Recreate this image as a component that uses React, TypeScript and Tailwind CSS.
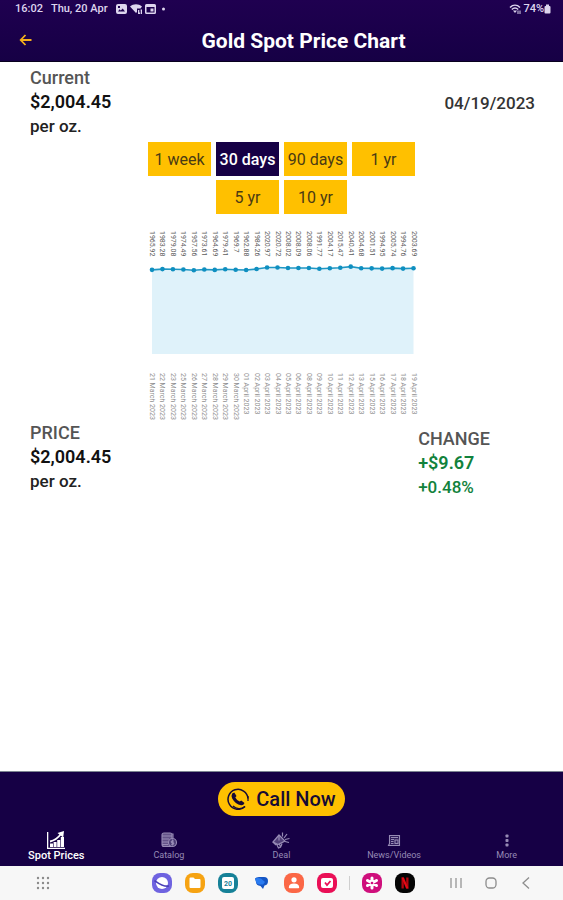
import React, { useState } from 'react';

interface PricePoint {
  price: string;
  date: string;
}

const points: PricePoint[] = [
  { price: '1965.92', date: '21 March 2023' },
  { price: '1983.28', date: '22 March 2023' },
  { price: '1979.08', date: '23 March 2023' },
  { price: '1974.49', date: '25 March 2023' },
  { price: '1957.56', date: '26 March 2023' },
  { price: '1973.61', date: '27 March 2023' },
  { price: '1964.69', date: '28 March 2023' },
  { price: '1979.41', date: '29 March 2023' },
  { price: '1969.7', date: '30 March 2023' },
  { price: '1962.88', date: '01 April 2023' },
  { price: '1984.26', date: '02 April 2023' },
  { price: '2020.97', date: '03 April 2023' },
  { price: '2020.72', date: '04 April 2023' },
  { price: '2008.02', date: '05 April 2023' },
  { price: '2008.09', date: '06 April 2023' },
  { price: '2008.06', date: '08 April 2023' },
  { price: '1991.77', date: '09 April 2023' },
  { price: '2004.17', date: '10 April 2023' },
  { price: '2015.47', date: '11 April 2023' },
  { price: '2040.41', date: '12 April 2023' },
  { price: '2004.68', date: '13 April 2023' },
  { price: '2001.51', date: '15 April 2023' },
  { price: '1994.95', date: '16 April 2023' },
  { price: '2005.74', date: '17 April 2023' },
  { price: '1994.76', date: '18 April 2023' },
  { price: '2003.69', date: '19 April 2023' }
];

const periods = ['1 week', '30 days', '90 days', '1 yr', '5 yr', '10 yr'];

function PriceChart() {
  const bottom = 128;
  const coords = points.map((point, index) => ({
    ...point,
    x: 6 + index * 10.46,
    y: bottom - Number(point.price) * 0.0428
  }));
  const line = coords.map((c) => `${c.x},${c.y}`).join(' ');
  const last = coords[coords.length - 1];

  return (
    <svg viewBox="0 0 272 195" className="w-68 overflow-visible" role="img" aria-label="Gold price">
      <polygon points={`6,${bottom} ${line} ${last.x},${bottom}`} fill="#dff2fa" />
      <polyline points={line} fill="none" stroke="#1f97c4" strokeWidth="1.6" />
      {coords.map((c) => (
        <g key={c.date}>
          <circle cx={c.x} cy={c.y} r="2.3" fill="#0f8fc0" />
          <text transform={`translate(${c.x - 2} 5) rotate(90)`} fontSize="7" fill="#5c5c5c">{c.price}</text>
          <text transform={`translate(${c.x - 2} 147) rotate(90)`} fontSize="7" fill="#8f8f8f">{c.date}</text>
        </g>
      ))}
    </svg>
  );
}

function StatusBar() {
  return (
    <div className="flex h-[18px] items-center justify-between pl-[15px] pr-3 text-[11px] font-medium text-[#ddd5ee]">
      <div className="flex items-center">
        <span>16:02</span>
        <span className="ml-2">Thu, 20 Apr</span>
        <svg viewBox="0 0 50 12" className="ml-2 h-3 w-[50px]" fill="currentColor">
          <path fillRule="evenodd" d="M2 1h7a2 2 0 0 1 2 2v6a2 2 0 0 1-2 2H2a2 2 0 0 1-2-2V3a2 2 0 0 1 2-2zM2 8.5h7L6.7 5.5 4.8 7.4 3.6 6.3zM2 3v2h2V3z" />
          <path d="M14 3.6C17.5.5 22.5.5 26 3.6L24.5 5.5H21V9L20 10z" />
          <path d="M22 7h1.3v2.5h1V11H22zM24.5 6.5H26V11h-1z" />
          <path fillRule="evenodd" d="M30.5 1h8A1.5 1.5 0 0 1 40 2.5v7a1.5 1.5 0 0 1-1.5 1.5h-8A1.5 1.5 0 0 1 29 9.5v-7A1.5 1.5 0 0 1 30.5 1zM30.5 4v5.5h8V4zM34.5 5.5h3v3h-3z" />
          <circle cx="47.5" cy="6" r="1.5" />
        </svg>
      </div>
      <div className="flex items-center">
        <svg viewBox="0 0 12 12" className="h-3 w-3" fill="none" stroke="currentColor" strokeWidth="1.5">
          <path d="M1 4.5C4 1.5 8 1.5 11 4.5M2.8 6.5C5 4.5 7 4.5 9.2 6.5" />
          <path d="M4 7.5 6 10 8 7.5z" fill="currentColor" stroke="none" />
          <path d="M9 7.5V11M11 7.5V11" strokeWidth="1" />
        </svg>
        <span className="ml-0.5">74%</span>
        <svg viewBox="0 0 7 10" className="h-2.5 w-[7px]" fill="currentColor">
          <rect x="2" y="0.5" width="3" height="2" />
          <rect x="0.5" y="2" width="6" height="7.5" rx="1" />
        </svg>
      </div>
    </div>
  );
}

const tabs = [
  {
    label: 'Spot Prices',
    icon: (
      <svg viewBox="0 0 18 18" className="h-[18px] w-[18px]" fill="currentColor">
        <path d="M0 1h1.3v15.7H18V18H0z" />
        <path d="M3 12.5h3V16H3zM6.6 11h3v5h-3zM10.2 9h3v7h-3zM13.8 6H17v10h-3.2z" />
        <path d="M3 10.5C8 9.5 11 7 14 3" fill="none" stroke="currentColor" strokeWidth="1.8" />
        <path d="M10.5 2 17 0l-.8 6.5z" />
      </svg>
    )
  },
  {
    label: 'Catalog',
    icon: (
      <svg viewBox="0 0 18 18" className="h-[18px] w-[18px]" fill="none" stroke="currentColor" strokeWidth="1.1">
        <rect x="2" y="2" width="10" height="13.5" rx="2" fill="currentColor" fillOpacity="0.6" />
        <path d="M2 5h10M2 8h7M2 11h6M2 13.5h6M12 3h1v4" />
        <circle cx="12.5" cy="11.5" r="4" fill="#4a3b74" />
        <path d="M12.5 8.5v6M14 10h-2a.8.8 0 0 0 0 1.6h1a.8.8 0 0 1 0 1.6h-2" />
      </svg>
    )
  },
  {
    label: 'Deal',
    icon: (
      <svg viewBox="0 0 18 18" className="h-[18px] w-[18px]" fill="none" stroke="currentColor" strokeWidth="1.2">
        <path d="M1 11 7 4l6 6-7 3.5z" fill="currentColor" fillOpacity="0.45" />
        <path d="M1 11l3 3M7 4v5.5M4.5 13l2 4 2-.8-1-3.2M10 12.5l-1 3" />
        <path d="M10.5 5.5v-4M12 7l3-4M13 8.5l4.5-1M13 10.5l4 1" />
      </svg>
    )
  },
  {
    label: 'News/Videos',
    icon: (
      <svg viewBox="0 0 18 18" className="h-[18px] w-[18px]" fill="none" stroke="currentColor" strokeWidth="1.1">
        <path d="M4.5 4.5h10v10h-11l1-2z" fill="currentColor" fillOpacity="0.2" />
        <path d="M6 6.5h7M6 8.5h3M6 10.5h2.5M6 12.5h2.5" />
        <rect x="10" y="9" width="3" height="3.5" />
      </svg>
    )
  },
  {
    label: 'More',
    icon: (
      <svg viewBox="0 0 18 18" className="h-[18px] w-[18px]" fill="currentColor">
        <rect x="7.5" y="3.5" width="3" height="3" rx="0.8" />
        <rect x="7.5" y="8" width="3" height="3" rx="0.8" />
        <rect x="7.5" y="12.5" width="3" height="3" rx="0.8" />
      </svg>
    )
  }
];

const dockApps = [
  {
    name: 'Internet',
    icon: (
      <>
        <rect width="20" height="20" rx="8" fill="#6f63e0" />
        <circle cx="10" cy="10" r="6" fill="#fff" />
        <path d="M2.5 7.5C6 10 11 14 17 13" fill="none" stroke="#4a3fb8" strokeWidth="1.6" />
      </>
    )
  },
  {
    name: 'My Files',
    icon: (
      <>
        <rect width="20" height="20" rx="8" fill="#f6a313" />
        <path d="M4.5 5.5q0-1 1-1h3L10 6h4.5q1 0 1 1v7q0 1-1 1h-9q-1 0-1-1z" fill="#fff" />
      </>
    )
  },
  {
    name: 'Calendar',
    icon: (
      <>
        <rect width="20" height="20" rx="8" fill="#168198" />
        <rect x="4" y="4" width="12" height="12" rx="2" fill="#fff" />
        <text x="10" y="12.8" textAnchor="middle" fontSize="7" fontWeight="700" fill="#168198">20</text>
      </>
    )
  },
  {
    name: 'Messages',
    icon: (
      <>
        <path d="M4 5.5Q5 4 8 4h5q4 0 4 4t-3.5 4.5L12 16l-2.5-3Q5 12.5 5 9z" fill="#1455c4" />
        <path d="M4 5.5Q7 4.5 10 5.5L14 9l-2 2.5H9Q5.5 11.5 5 8.5z" fill="#2a7bf0" />
      </>
    )
  },
  {
    name: 'Contacts',
    icon: (
      <>
        <rect width="20" height="20" rx="8" fill="#fb6746" />
        <circle cx="10" cy="6.8" r="2.6" fill="#fff" />
        <path d="M4.8 14.5q0-4 5.2-4t5.2 4q0 .8-.8.8H5.600q-.8 0-.8-.8z" fill="#fff" />
      </>
    )
  },
  {
    name: 'Shop',
    icon: (
      <>
        <rect width="20" height="20" rx="8" fill="#ea0f56" />
        <rect x="4" y="5" width="12" height="10" rx="2" fill="#fff" />
        <path d="M8 9.5 10 12l3.5-4" fill="none" stroke="#ea0f56" strokeWidth="1.8" />
      </>
    )
  }
];

const recentApps = [
  {
    name: 'Gallery',
    icon: (
      <>
        <rect width="20" height="20" rx="8" fill="#cf0f7c" />
        <path d="M10 5v10M5.5 7.5l9 5M5.5 12.5l9-5" stroke="#fff" strokeWidth="3" strokeLinecap="round" />
        <circle cx="10" cy="10" r="1.3" fill="#cf0f7c" />
      </>
    )
  },
  {
    name: 'Netflix',
    icon: (
      <>
        <rect width="20" height="20" rx="8" fill="#050505" />
        <path d="M6.5 4.5h2.3v11H6.5zM11.2 4.5h2.3v11h-2.3z" fill="#b1060f" />
        <path d="M6.5 4.5h2.4l4.6 11h-2.4z" fill="#e50914" />
      </>
    )
  }
];

function AppIcon({ name, icon }: { name: string; icon: React.ReactNode }) {
  return (
    <button aria-label={name} className="shrink-0">
      <svg viewBox="0 0 20 20" className="h-5 w-5">{icon}</svg>
    </button>
  );
}

function Dock() {
  return (
    <div className="flex h-[34px] items-center bg-[#f7f7f7] pl-9 pr-[30px]">
      <button aria-label="All apps">
        <svg viewBox="0 0 14 14" className="h-3.5 w-3.5" fill="#8b8b8b">
          {[2, 7, 12].map((y) => [2, 7, 12].map((x) => <circle key={`${x}-${y}`} cx={x} cy={y} r="1.2" />))}
        </svg>
      </button>
      <div className="flex-3" />
      <div className="flex items-center gap-[13px]">
        {dockApps.map((app) => <AppIcon key={app.name} {...app} />)}
      </div>
      <div className="mx-3 h-3.5 w-px bg-[#cfcfcf]" />
      <div className="flex items-center gap-[13px]">
        {recentApps.map((app) => <AppIcon key={app.name} {...app} />)}
      </div>
      <div className="flex-1" />
      <div className="flex items-center gap-[21px]">
        <button aria-label="Recents">
          <svg viewBox="0 0 14 14" className="h-3.5 w-3.5" stroke="#8d8d8d" strokeWidth="1.2">
            <path d="M2 2v10M7 2v10M12 2v10" />
          </svg>
        </button>
        <button aria-label="Home">
          <svg viewBox="0 0 14 14" className="h-3.5 w-3.5" fill="none" stroke="#8d8d8d" strokeWidth="1.3">
            <rect x="2" y="2" width="10" height="10" rx="3.5" />
          </svg>
        </button>
        <button aria-label="Back">
          <svg viewBox="0 0 14 14" className="h-3.5 w-3.5" fill="none" stroke="#8d8d8d" strokeWidth="1.3">
            <path d="M10 1.5 4 7l6 5.5" />
          </svg>
        </button>
      </div>
    </div>
  );
}

export default function App() {
  const [period, setPeriod] = useState('30 days');
  const [activeTab, setActiveTab] = useState('Spot Prices');

  return (
    <div className="flex min-h-screen flex-col bg-white font-[Roboto,sans-serif]">
      <header className="border-b border-[#08001f] bg-linear-to-b from-[#1f0050] to-[#160045]">
        <StatusBar />
        <div className="flex h-[43px] items-center px-[18px]">
          <button aria-label="Back" className="text-[#f5b01b]">
            <svg viewBox="0 0 16 16" className="h-4 w-4" fill="none" stroke="currentColor" strokeWidth="1.8">
              <path d="M13.5 8H3M7.5 3 2.7 8l4.8 5" />
            </svg>
          </button>
          <h1 className="flex-1 pl-7 pt-1 text-center text-[21px] font-bold text-white">Gold Spot Price Chart</h1>
        </div>
      </header>

      <main className="flex-1 pt-1">
        <div className="flex items-center justify-between pl-[30px] pr-7 leading-6">
          <div>
            <p className="text-[18px] font-medium text-[#555555]">Current</p>
            <p className="text-[18px] font-semibold text-[#111111]">$2,004.45</p>
            <p className="text-[17px] font-medium text-[#222222]">per oz.</p>
          </div>
          <p className="pt-0.5 text-[17px] font-medium text-[#333333]">04/19/2023</p>
        </div>

        <div className="mx-auto mt-1 flex w-[270px] flex-wrap justify-center gap-x-[5px] gap-y-1">
          {periods.map((item) => (
            <button
              key={item}
              onClick={() => setPeriod(item)}
              className={
                item === period
                  ? 'h-[34px] w-[63px] whitespace-nowrap bg-[#160045] pt-0.5 text-[16px] font-medium text-white'
                  : 'h-[34px] w-[63px] whitespace-nowrap bg-[#ffc000] pt-0.5 text-[16px] text-[#4a3a14]'
              }
            >
              {item}
            </button>
          ))}
        </div>

        <div className="mt-3 flex justify-center">
          <PriceChart />
        </div>

        <div className="flex justify-between pl-[30px] pr-[73px] leading-6">
          <div>
            <p className="text-[18px] font-medium text-[#555555]">PRICE</p>
            <p className="text-[18px] font-semibold text-[#111111]">$2,004.45</p>
            <p className="text-[17px] font-medium text-[#222222]">per oz.</p>
          </div>
          <div className="pt-1.5">
            <p className="text-[18px] font-medium text-[#555555]">CHANGE</p>
            <p className="text-[18px] font-semibold text-[#12823c]">+$9.67</p>
            <p className="text-[17px] font-medium text-[#12823c]">+0.48%</p>
          </div>
        </div>
      </main>

      <footer>
        <div className="border-t border-[#7d8592] bg-[#160045] pt-2.5">
          <button className="mx-auto flex h-[34px] items-center gap-[7px] rounded-full bg-[#ffc000] px-[9px] text-[20px] font-medium text-[#160a35]">
            <svg viewBox="0 0 22 22" className="h-[22px] w-[22px]" fill="none" stroke="currentColor">
              <path d="M18 18.5A10 10 0 1 1 21 10.5" strokeWidth="1.5" />
              <path d="M6 18A9 9 0 0 0 18 18.5M21 8v5" strokeWidth="1.2" />
              <path d="M5.2 5.6 7.3 4.5 9.5 8 8.3 9.4q1.6 3 4.4 4.2l1.5-1.1 3.3 2.5q-.9 2.5-3.5 2.2Q8.5 16.5 5.2 10.5 4 7.5 5.2 5.6z" fill="currentColor" stroke="none" />
            </svg>
            Call Now
          </button>
          <nav className="mt-[15px] grid grid-cols-5 pb-1">
            {tabs.map((tab) => (
              <a
                key={tab.label}
                href="#"
                onClick={(e) => {
                  e.preventDefault();
                  setActiveTab(tab.label);
                }}
                className={
                  tab.label === activeTab
                    ? 'flex flex-col items-center text-[11px] font-medium leading-[13px] text-white'
                    : 'flex flex-col items-center text-[9px] leading-[13px] text-[#978bb5]'
                }
              >
                {tab.icon}
                {tab.label}
              </a>
            ))}
          </nav>
        </div>
        <Dock />
      </footer>
    </div>
  );
}
